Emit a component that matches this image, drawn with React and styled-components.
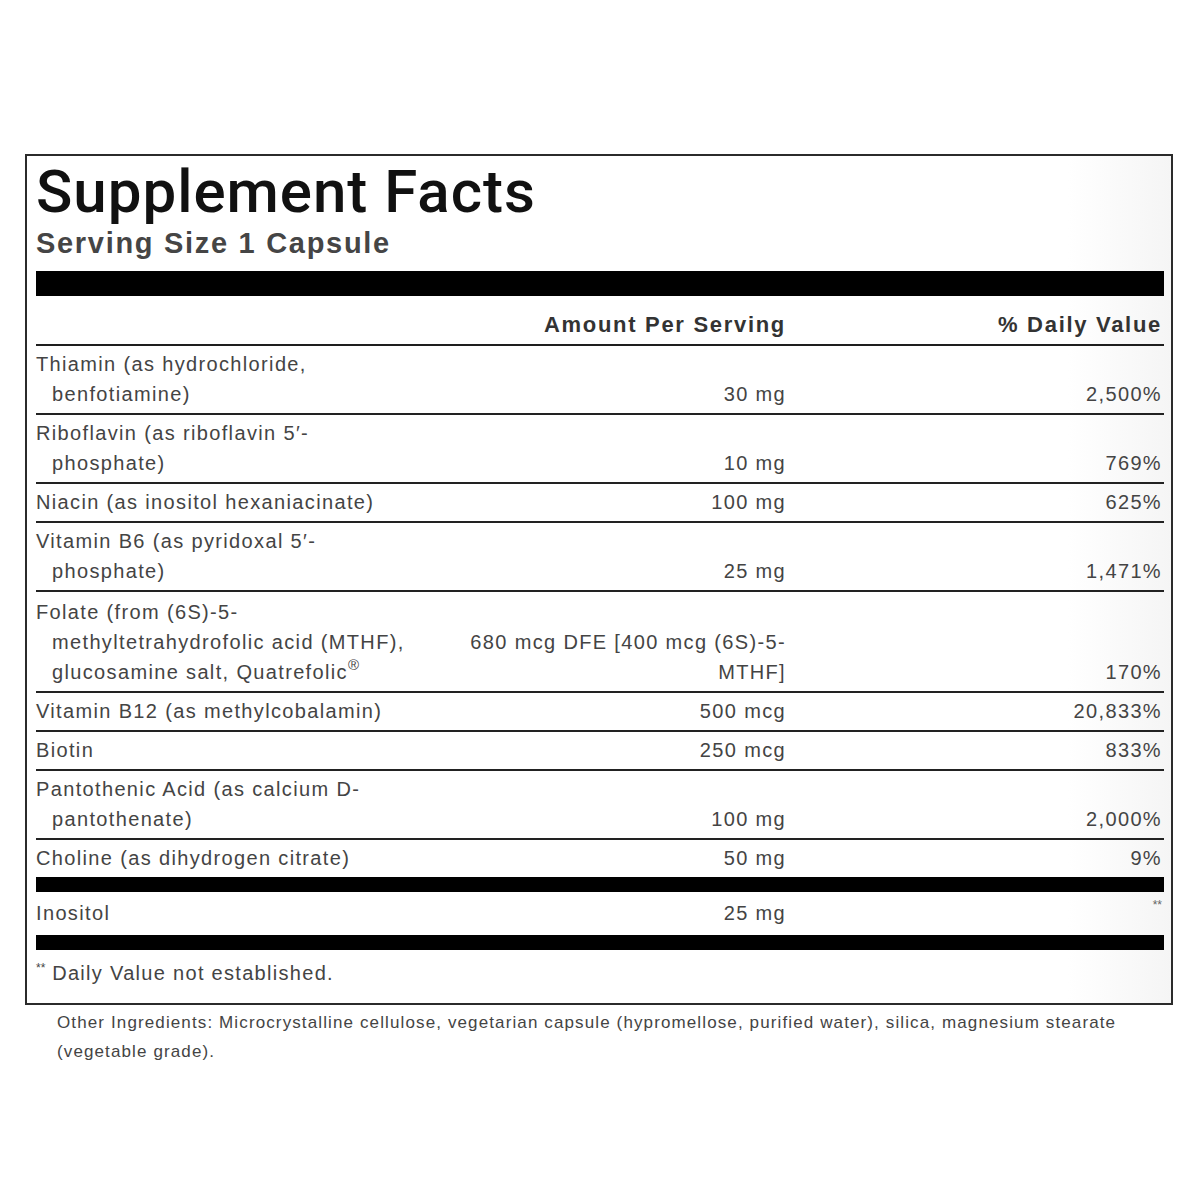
import React from "react";
import styled, { createGlobalStyle } from "styled-components";

const GlobalStyle = createGlobalStyle`
  html, body {
    margin: 0;
    padding: 0;
    background: #ffffff;
  }
  body {
    font-family: "Liberation Sans", Arial, sans-serif;
  }
`;

const Page = styled.div`
  width: 1200px;
  height: 1200px;
  padding: 154px 0 0 25px;
  box-sizing: border-box;
`;

const Label = styled.div`
  width: 1148px;
  box-sizing: border-box;
  border: 2px solid #2b2b2b;
  padding: 0 7px 0 9px;
  background: linear-gradient(to right, #ffffff 91%, #f5f5f5 100%);
`;

const Title = styled.div`
  font-family: Roboto, "Liberation Sans", Arial, sans-serif;
  font-weight: 500;
  font-size: 60px;
  line-height: 66px;
  letter-spacing: 1px;
  color: #111;
  margin-top: 3px;
`;

const Serving = styled.div`
  font-weight: 700;
  font-size: 29px;
  line-height: 34px;
  letter-spacing: 1.7px;
  color: #454545;
  margin-top: 1px;
`;

const ThickBar = styled.div`
  height: ${(p) => p.$h}px;
  margin-top: ${(p) => p.$mt || 0}px;
  background: #000;
`;

const HeaderRow = styled.div`
  display: grid;
  grid-template-columns: 376px 376px 1fr;
  align-items: end;
  padding: 14px 0 4px;
  border-bottom: 2px solid #1e1e1e;
`;

const HeadCell = styled.div`
  text-align: right;
  font-weight: 700;
  font-size: 22px;
  line-height: 30px;
  letter-spacing: 1.7px;
  color: #333;
  padding-right: 2px;
`;

const Row = styled.div`
  display: grid;
  grid-template-columns: 376px 376px 1fr;
  align-items: end;
  padding: ${(p) => (p.$tall ? "6px 0 7px" : p.$roomy ? "5px 0 4px" : "3px 0 4px")};
  border-bottom: ${(p) => (p.$last ? "none" : "2px solid #222")};
  font-size: 20px;
  line-height: 30px;
  letter-spacing: 1.35px;
  color: #444;
`;

const Name = styled.div`
  padding-left: 16px;
  text-indent: -16px;
  padding-right: 4px;
`;

const Amount = styled.div`
  text-align: right;
  padding-right: 2px;
  padding-left: 40px;
`;

const Dv = styled.div`
  text-align: right;
  padding-right: 2px;
`;

const DvTop = styled(Dv)`
  align-self: start;
  font-size: 12px;
  line-height: 14px;
  letter-spacing: 0;
  color: #666;
`;

const Reg = styled.sup`
  font-size: 15px;
  line-height: 0;
  letter-spacing: 0;
  vertical-align: 9px;
`;

const Footnote = styled.div`
  font-size: 20px;
  line-height: 30px;
  letter-spacing: 1.3px;
  color: #444;
  padding: 8px 0 15px;
`;

const Stars = styled.sup`
  font-size: 12px;
  line-height: 0;
  letter-spacing: 0;
  vertical-align: 8px;
`;

const Other = styled.div`
  width: 1100px;
  margin: 3px 0 0 32px;
  font-size: 17px;
  line-height: 29px;
  letter-spacing: 1.12px;
  color: #444;
`;

const rows = [
  { name: "Thiamin (as hydrochloride, benfotiamine)", amount: "30 mg", dv: "2,500%" },
  { name: "Riboflavin (as riboflavin 5\u2032-phosphate)", amount: "10 mg", dv: "769%" },
  { name: "Niacin (as inositol hexaniacinate)", amount: "100 mg", dv: "625%" },
  { name: "Vitamin B6 (as pyridoxal 5\u2032-phosphate)", amount: "25 mg", dv: "1,471%" },
  {
    name: (
      <>
        Folate (from (6S)-5-methyltetrahydrofolic acid (MTHF), glucosamine salt, Quatrefolic<Reg>®</Reg>
      </>
    ),
    amount: "680 mcg DFE [400 mcg (6S)-5-MTHF]",
    dv: "170%",
    roomy: true,
  },
  { name: "Vitamin B12 (as methylcobalamin)", amount: "500 mcg", dv: "20,833%" },
  { name: "Biotin", amount: "250 mcg", dv: "833%" },
  { name: "Pantothenic Acid (as calcium D-pantothenate)", amount: "100 mg", dv: "2,000%" },
  { name: "Choline (as dihydrogen citrate)", amount: "50 mg", dv: "9%", last: true },
];

function App() {
  return (
    <Page>
      <GlobalStyle />
      <Label>
        <Title>Supplement Facts</Title>
        <Serving>Serving Size 1 Capsule</Serving>
        <ThickBar $h={25} $mt={11} />
        <HeaderRow>
          <div />
          <HeadCell>Amount Per Serving</HeadCell>
          <HeadCell>% Daily Value</HeadCell>
        </HeaderRow>
        {rows.map((r, i) => (
          <Row key={i} $last={r.last} $roomy={r.roomy}>
            <Name>{r.name}</Name>
            <Amount>{r.amount}</Amount>
            <Dv>{r.dv}</Dv>
          </Row>
        ))}
        <ThickBar $h={15} />
        <Row $last $tall>
          <Name>Inositol</Name>
          <Amount>25 mg</Amount>
          <DvTop>**</DvTop>
        </Row>
        <ThickBar $h={15} />
        <Footnote>
          <Stars>**</Stars> Daily Value not established.
        </Footnote>
      </Label>
      <Other>
        Other Ingredients: Microcrystalline cellulose, vegetarian capsule (hypromellose, purified water), silica,
        magnesium stearate (vegetable grade).
      </Other>
    </Page>
  );
}

export default App;
